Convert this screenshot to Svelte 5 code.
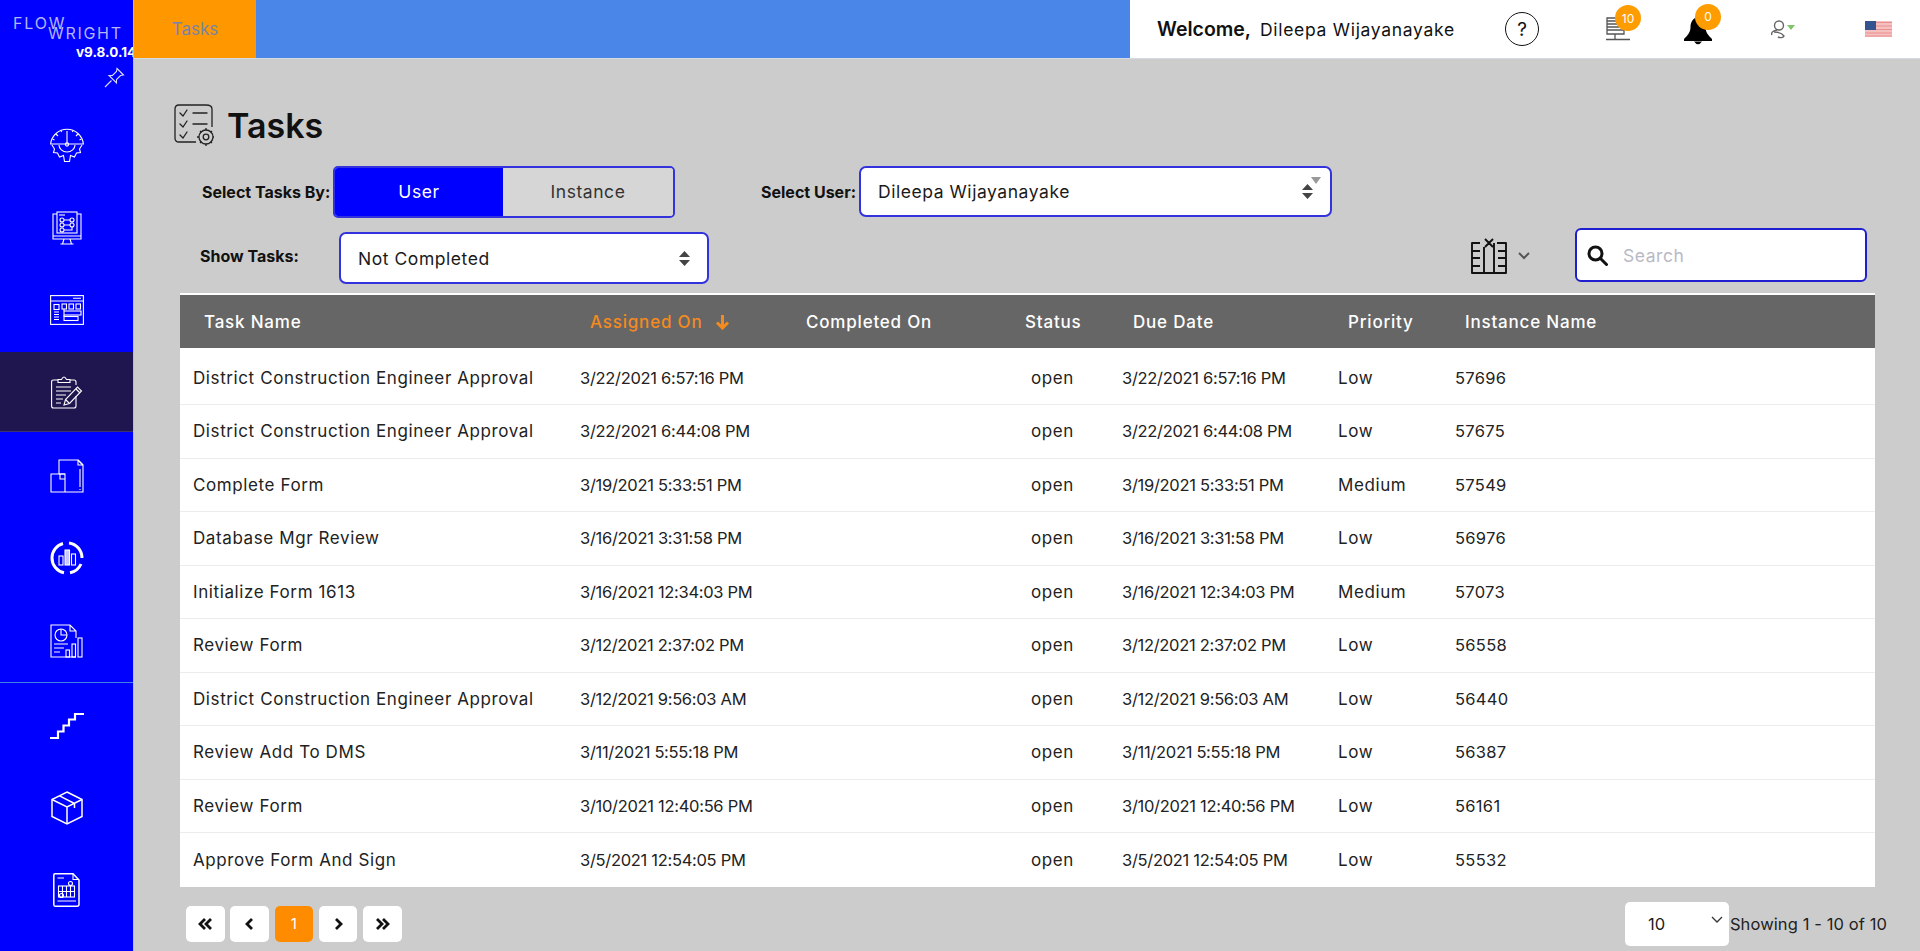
<script>
  const rows = [
    ['District Construction Engineer Approval', '3/22/2021 6:57:16 PM', 'Low', '57696'],
    ['District Construction Engineer Approval', '3/22/2021 6:44:08 PM', 'Low', '57675'],
    ['Complete Form', '3/19/2021 5:33:51 PM', 'Medium', '57549'],
    ['Database Mgr Review', '3/16/2021 3:31:58 PM', 'Low', '56976'],
    ['Initialize Form 1613', '3/16/2021 12:34:03 PM', 'Medium', '57073'],
    ['Review Form', '3/12/2021 2:37:02 PM', 'Low', '56558'],
    ['District Construction Engineer Approval', '3/12/2021 9:56:03 AM', 'Low', '56440'],
    ['Review Add To DMS', '3/11/2021 5:55:18 PM', 'Low', '56387'],
    ['Review Form', '3/10/2021 12:40:56 PM', 'Low', '56161'],
    ['Approve Form And Sign', '3/5/2021 12:54:05 PM', 'Low', '55532']
  ];
</script>

<div class="app">
  <aside class="side">
    <div class="logo">
      <div class="flow">FLOW</div>
      <div class="wright">WRIGHT</div>
      <div class="ver">v9.8.0.14</div>
      <svg class="pin" width="21" height="21" viewBox="0 0 21 21"><path d="M1 20 7.500 13.500M13 1.500 19.500 8 16.500 8.500 12.500 12.500 12.500 16 5 8.500 8.500 8.500 12.500 4.500Z"/></svg>
    </div>
    <nav class="group">
      <div class="item"><svg width="34" height="35" viewBox="0 0 34 35"><path d="M.6 16A16.500 16.500 0 0 1 33.400 16H.6Z"/><path d="M17 3V15M6 6l2 2M28 6l-2 2M2.500 11l2 1M31.500 11l-2 1M11 2.500l.6 1.500M23 2.500l-.6 1.500"/><circle cx="17" cy="16.500" r="1.600"/><path d="M2 17 4.500 21 3.500 24.500 7.500 25 9.500 29 13.500 27.500 14.500 33.500H19.500L20.500 27.500 24.500 29 26.500 25 30.500 24.500 29.500 21 32 17"/><path d="M9 17A8 7 0 0 0 25 17"/></svg></div>
      <div class="item"><svg width="30" height="34" viewBox="0 0 30 34"><path d="M5 3H1V25H29V3H25M1 25V28H29V25M12 28 10.500 33H19.500L18 28M8.500 33H21.500"/><rect x="5" y="1" width="20" height="21"/><path d="M7 4H13"/><circle cx="10" cy="9" r="2"/><circle cx="20" cy="9" r="2"/><circle cx="10" cy="14" r="2"/><circle cx="20" cy="14" r="2"/><circle cx="10" cy="19" r="2"/><path d="M12 9H18M12 14H18M12 19H20V16"/></svg></div>
      <div class="item"><svg width="34" height="30" viewBox="0 0 34 30"><rect x=".6" y=".6" width="32.800" height="28.800"/><path d="M.6 6H33.400M23 3.200H31"/><rect x="4" y="9.500" width="5" height="5"/><path d="M4 17H9M4 19.500H9M4 22H9M4 24.500H9M14 14V16M14 20V21.500"/><rect x="12" y="9" width="4.500" height="5"/><rect x="19" y="9" width="4.500" height="5"/><rect x="26" y="9" width="4.500" height="5"/><rect x="14" y="16" width="17" height="4"/><rect x="14" y="21.500" width="14" height="4"/></svg></div>
      <div class="item active"><svg width="32" height="35" viewBox="0 0 32 35"><path d="M7 6H2.500Q.6 6 .6 8V32Q.6 34 2.500 34H23Q25 34 25 32V22M25 11V8Q25 6 23 6H19"/><path d="M7 8.500V5.500H10.500Q13 .6 15.500 5.500H19V8.500Z"/><path d="M5 13H20M5 17H20M5 21H15M5 25H12M5 29H10"/><path d="M13 31 14.500 25.500 26.500 13 30.500 17 18.500 29.500Z M25 15 28.500 18.500 M15 26 18 29"/></svg></div>
      <div class="item"><svg width="34" height="34" viewBox="0 0 34 34"><path d="M9 15V1H28L33 6V33H1V15H15V33"/><path d="M28 1V6H33M28 1 33 6M30 10V28M30 30V31"/><path d="M9 15H15M10 15V20H15"/></svg></div>
      <div class="item"><svg width="34" height="34" viewBox="0 0 34 34"><path class="ring" d="M19 2A15 15 0 0 1 32 17M31 23A15 15 0 0 1 20 31.700M14 31.700A15 15 0 0 1 2 17A15 15 0 0 1 13 2.500"/><rect x="9" y="15" width="4" height="9"/><rect x="15" y="9" width="4.500" height="15" class="solid"/><rect x="21.500" y="13" width="4" height="11"/></svg></div>
      <div class="item"><svg width="34" height="34" viewBox="0 0 34 34"><path d="M26 33H1V1H20L26 7V14M20 1V7H26"/><circle cx="11" cy="11" r="6"/><path d="M11 5V11H17M4 20H18M4 24H14M4 28H10"/><rect x="16" y="26" width="3.500" height="7"/><rect x="22" y="20" width="3.500" height="13"/><rect x="28" y="14" width="4" height="19"/></svg></div>
    </nav>
    <nav class="group second">
      <div class="item"><svg class="thick" width="34" height="26" viewBox="0 0 34 26"><path d="M0 25H8V18.500H13.500V12.500H19V6.500H25V1H34"/></svg></div>
      <div class="item"><svg class="mid" width="32" height="34" viewBox="0 0 32 34"><path d="M16 1 31 8.500V25.500L16 33 1 25.500V8.500Z"/><path d="M1 8.500 16 16 31 8.500M16 16V33M8.500 4.800 23.500 12.500V17"/></svg></div>
      <div class="item"><svg width="27" height="34" viewBox="0 0 27 34"><path class="mid" d="M2 .8H20L26 7V31.500Q26 33.200 24 33.200H2Q.8 33.200 .8 31.500V2Q.8 .8 2 .8Z"/><path d="M20 .8V6.500H26M4.500 5H11M4.500 28H23"/><rect x="5.500" y="13" width="16" height="11"/><path d="M9.500 13V24M13.500 13V24M17.500 13V24M5.500 18.500H21.500"/><circle cx="17.500" cy="10.500" r="2"/><circle cx="8.500" cy="22.500" r="2"/></svg></div>
    </nav>
  </aside>

  <div class="right">
    <header class="top">
      <div class="tab">Tasks</div>
      <div class="fill"></div>
      <div class="user">
        <b class="welcome">Welcome,</b><span class="name">Dileepa Wijayanayake</span>
        <span class="help">?</span>
        <span class="ic server">
          <svg width="24" height="24" viewBox="0 0 24 24"><path d="M1 1H18V17H1ZM1 4H18M1 7H18M1 10H18M1 13H18M9 17V22M0 22.500H24" fill="none" stroke="#555" stroke-width="1.300"/></svg>
          <span class="badge">10</span>
        </span>
        <span class="ic bell">
          <svg width="28" height="28" viewBox="0 0 28 28"><path d="M14 0C9 1 6.500 5 6.500 10 6.500 15 4 18 0 22V24H28V22C24 18 21.500 15 21.500 10 21.500 5 19 1 14 0ZM10 24.500H18Q14 30 10 24.500Z"/></svg>
          <span class="badge">0</span>
        </span>
        <span class="ic prof">
          <svg width="24" height="19" viewBox="0 0 24 19"><circle cx="8" cy="5.500" r="4.500" fill="none" stroke="#666" stroke-width="1.400"/><path d="M6 10C1 11 0 13 1 15M3 12C7 12 11 13 13 16 12 18 9 18 7 17" fill="none" stroke="#666" stroke-width="1.400"/><path d="M16 5H24L20 10Z" fill="#7fc467"/></svg>
        </span>
        <span class="ic flag">
          <svg width="27" height="16" viewBox="0 0 27 16"><rect width="27" height="16" fill="#f5c0c0"/><path d="M0 1.500H27M0 5H27M0 8.500H27M0 12H27M0 15H27" stroke="#ea8e8e" stroke-width="1.200"/><rect width="11" height="9" fill="#35548f"/></svg>
        </span>
      </div>
    </header>

    <main class="main">
      <div class="title">
        <svg width="40" height="42" viewBox="0 0 40 42" fill="none" stroke="#222" stroke-width="1.300"><path d="M22 38H5Q1 38 1 34V5Q1 1 5 1H32Q38 1 38 5V23"/><path d="M6 9 9 12 13 6M6 20 9 23 13 17M6 31 9 34 13 28M19 9H33M19 20H33" stroke-linecap="round"/><circle cx="32" cy="33" r="7"/><circle cx="32" cy="33" r="2.800"/><path d="M32 24V26M32 40V42M23 33H25M39 33H40M26 27 27.500 28.500M36.500 37.500 38 39M38 27 36.500 28.500M27.500 37.500 26 39"/></svg>
        <h1>Tasks</h1>
      </div>

      <div class="filter one">
        <label class="lb1">Select Tasks By:</label>
        <div class="toggle"><span class="on">User</span><span class="off">Instance</span></div>
        <label class="lb2">Select User:</label>
        <div class="sel usersel">
          <span>Dileepa Wijayanayake</span>
          <svg class="tri" width="10" height="7" viewBox="0 0 10 7"><path d="M0 0H10L5 7Z" fill="#999"/></svg>
          <svg width="11" height="15" viewBox="0 0 11 15"><path d="M5.500 0 11 6H0ZM5.500 15 0 9H11Z" fill="#444"/></svg>
        </div>
      </div>

      <div class="filter two">
        <label class="lb3">Show Tasks:</label>
        <div class="sel showsel">
          <span>Not Completed</span>
          <svg width="11" height="15" viewBox="0 0 11 15"><path d="M5.500 0 11 6H0ZM5.500 15 0 9H11Z" fill="#444"/></svg>
        </div>
        <div class="cols">
          <svg width="36" height="36" viewBox="0 0 36 36" fill="none" stroke="#111" stroke-width="1.900" stroke-linejoin="round"><path d="M9 5H1V35H35V5H26M1 13H9M1 20H9M1 28H9M27 13H35M27 20H35M27 28H35M13 9V35M23 5V35M14 1 22 9M22 1 14 9"/></svg>
          <svg width="12" height="8" viewBox="0 0 12 8" fill="none" stroke="#555" stroke-width="2"><path d="M1 1 6 6 11 1"/></svg>
        </div>
        <div class="search">
          <svg width="21" height="21" viewBox="0 0 21 21" fill="none" stroke="#111" stroke-width="3"><circle cx="8.500" cy="8.500" r="6.500"/><path d="M13.500 13.500 19.500 19.500" stroke-linecap="round"/></svg>
          <span class="ph">Search</span>
        </div>
      </div>

      <section class="table">
        <div class="thead">
          <span>Task Name</span>
          <span class="sorted">Assigned On <svg width="15" height="16" viewBox="0 0 15 16" fill="none" stroke="#f58a1f" stroke-width="3"><path d="M7.500 1V14M2 8.500 7.500 14 13 8.500"/></svg></span>
          <span>Completed On</span>
          <span>Status</span>
          <span>Due Date</span>
          <span>Priority</span>
          <span>Instance Name</span>
        </div>
        {#each rows as r}
          <div class="tr">
            <span>{r[0]}</span>
            <span class="date">{r[1]}</span>
            <span></span>
            <span>open</span>
            <span class="date">{r[1]}</span>
            <span>{r[2]}</span>
            <span class="num">{r[3]}</span>
          </div>
        {/each}
      </section>

      <footer class="foot">
        <div class="pager">
          <span class="pg"><svg width="15" height="12" viewBox="0 0 15 12"><path d="M7 1 2 6 7 11M13 1 8 6 13 11"/></svg></span>
          <span class="pg"><svg width="9" height="12" viewBox="0 0 9 12"><path d="M7 1 2 6 7 11"/></svg></span>
          <span class="pg cur">1</span>
          <span class="pg"><svg width="9" height="12" viewBox="0 0 9 12"><path d="M2 1 7 6 2 11"/></svg></span>
          <span class="pg"><svg width="15" height="12" viewBox="0 0 15 12"><path d="M2 1 7 6 2 11M8 1 13 6 8 11"/></svg></span>
        </div>
        <div class="info">
          <div class="per"><span>10</span><svg width="12" height="7" viewBox="0 0 12 7" fill="none" stroke="#333" stroke-width="1.300"><path d="M1 1 6 6 11 1"/></svg></div>
          <span class="showing">Showing 1 - 10 of 10</span>
        </div>
      </footer>
    </main>
  </div>
</div>

<style>
  :global(body) { margin: 0; background: #ccc; font-family: Inter, "Liberation Sans", sans-serif; }
  .app { display: flex; width: 1920px; height: 951px; overflow: hidden; color: #1c1c1c; }

  .side { width: 134px; flex: none; background: #0000ff; border-right: 1px solid #b8b8e8; box-sizing: border-box; overflow: hidden; }
  .logo { height: 104px; position: relative; color: #b4b4f8; font-weight: 400; }
  .flow { font-size: 16px; letter-spacing: 1.800px; line-height: 10px; padding: 18px 0 0 13px; }
  .wright { font-size: 16px; letter-spacing: 1.700px; line-height: 10px; padding-left: 48px; }
  .ver { color: #fff; font-weight: 700; font-size: 13.500px; padding-left: 76px; white-space: nowrap; margin-top: 6px; line-height: 16px; }
  .pin { position: absolute; left: 104px; top: 67px; }
  .side svg { fill: none; stroke: #fff; stroke-width: 1.100; }
  .pin path { stroke: #dcdcff; }
  .group { display: flex; flex-direction: column; border-bottom: 1px solid #3f83e0; }
  .group.second { border: 0; padding-top: 2px; }
  .item { height: 82.600px; display: flex; align-items: center; justify-content: center; flex: none; }
  .second .item { height: 82px; }
  .item.active { height: 80px; margin-bottom: 2.600px; background: #1f164f; border-bottom: 1px solid #3a3270; box-sizing: border-box; }
  .side svg.thick { stroke-width: 2.200; }
  .side svg.mid, .side .mid { stroke-width: 1.500; }
  .side .ring { stroke-width: 3; }
  .side .solid { fill: #c8c8ff; }

  .right { flex: 1; min-width: 0; }
  .top { display: flex; height: 59px; background: #fff; border-bottom: 1px solid #d4dbe2; box-sizing: border-box; }
  .tab { width: 122px; background: #ff9800; color: #7585a8; font-size: 17px; display: flex; align-items: center; justify-content: center; }
  .fill { width: 874px; background: #4a86e8; }
  .user { flex: 1; display: flex; align-items: center; padding-left: 27px; }
  .welcome { font-weight: 600; font-size: 19.500px; width: 103px; color: #111; white-space: nowrap; }
  .name { font-size: 17.500px; letter-spacing: .7px; width: 245px; color: #111; white-space: nowrap; }
  .help { width: 34px; height: 34px; box-sizing: border-box; border: 1.500px solid #111; border-radius: 50%; display: flex; align-items: center; justify-content: center; font-size: 19px; color: #111; }
  .ic { position: relative; display: flex; }
  .server { margin-left: 67px; }
  .bell { margin-left: 54px; margin-top: 3px; }
  .prof { margin-left: 59px; }
  .flag { margin-left: 70px; }
  .badge { position: absolute; left: 9px; top: -12px; width: 26px; height: 26px; border-radius: 50%; background: #ff9c00; color: #fff; font-size: 12px; display: flex; align-items: center; justify-content: center; }
  .bell .badge { left: 11px; top: -13px; }

  .main { padding: 0 45px 0 46px; }
  .title { display: flex; align-items: center; gap: 13px; height: 106px; margin-left: -6px; box-sizing: border-box; padding-top: 26px; }
  h1 { margin: 0; font-size: 34px; font-weight: 600; color: #111; }
  .filter { display: flex; align-items: center; font-size: 17.500px; letter-spacing: .55px; }
  .filter label { font-weight: 700; font-size: 16px; letter-spacing: 0; color: #111; white-space: nowrap; }
  .one { height: 53px; }
  .two { height: 56px; margin-top: 10px; }
  .lb1 { margin-left: 22px; width: 131px; }
  .toggle { display: flex; width: 342px; height: 52px; box-sizing: border-box; border: 2px solid #3333dd; border-radius: 5px; overflow: hidden; }
  .toggle span { display: flex; align-items: center; justify-content: center; }
  .on { width: 168px; background: #0000ff; color: #fff; }
  .off { flex: 1; background: #d6d6d6; color: #333; }
  .lb2 { margin-left: 86px; width: 98px; }
  .sel { display: flex; align-items: center; justify-content: space-between; background: #fff; box-sizing: border-box; border: 2px solid #3333dd; border-radius: 7px; padding: 0 17px; position: relative; color: #1a1a1a; }
  .usersel { width: 473px; height: 51px; }
  .tri { position: absolute; right: 9px; top: 9px; }
  .lb3 { margin-left: 20px; width: 139px; }
  .showsel { width: 370px; height: 52px; margin-top: 4px; }
  .cols { display: flex; align-items: center; gap: 11px; margin-left: 762px; }
  .search { display: flex; align-items: center; gap: 15px; width: 292px; height: 54px; margin-left: 45px; margin-top: -2px; box-sizing: border-box; border: 2px solid #1f1fd0; border-radius: 6px; background: #fff; padding-left: 10px; }
  .ph { color: #b9b9c6; }

  .table { margin-top: 9px; width: 1695px; background: #fff; border-top: 2px solid #fff; }
  .thead, .tr { display: grid; align-items: center; }
  .thead { grid-template-columns: 386px 216px 219px 108px 215px 117px 1fr; padding-left: 24px; height: 53px; margin-bottom: 3.500px; background: #666; color: #fff; font-weight: 500; font-size: 17px; letter-spacing: .8px; }
  .sorted { color: #f58a1f; display: flex; align-items: center; gap: 13px; }
  .tr { grid-template-columns: 387px 228px 223px 91px 216px 117px 1fr; padding-left: 13px; height: 53.500px; border-bottom: 1px solid #ececec; box-sizing: border-box; color: #222; font-size: 17px; letter-spacing: .6px; }
  .tr .date { font-size: 16.500px; letter-spacing: -.3px; }
  .tr .num { font-size: 16.500px; letter-spacing: .3px; }
  .tr:last-child { border-bottom: 0; }
  .tr span { white-space: nowrap; }

  .foot { display: flex; justify-content: space-between; margin-top: 15px; width: 1707px; }
  .pager { display: flex; gap: 5.750px; padding: 4px 0 0 6px; }
  .pg { width: 38.500px; height: 36px; background: #fff; border-radius: 5px; display: flex; align-items: center; justify-content: center; }
  .pg svg { fill: none; stroke: #111; stroke-width: 2.800; }
  .cur { background: #ff8c00; color: #fff; font-size: 15px; }
  .info { display: flex; align-items: center; }
  .per { width: 104px; height: 44px; background: #fff; border-radius: 5px; display: flex; align-items: center; justify-content: space-between; padding: 0 6px 0 23px; box-sizing: border-box; font-size: 16.500px; margin-right: 1px; }
  .per svg { margin-top: -8px; }
  .showing { font-size: 16.500px; letter-spacing: .1px; color: #222; white-space: nowrap; }
</style>
